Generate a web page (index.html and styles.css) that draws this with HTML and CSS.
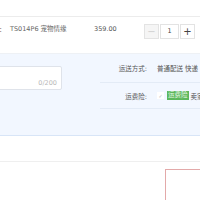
FILE: index.html
```html
<!DOCTYPE html>
<html>
<head>
<meta charset="utf-8">
<link rel="stylesheet" href="styles.css">
</head>
<body>
<div class="page">
  <div class="top"></div>
  <div class="item-row">
    <div class="sku"><span class="colon">：</span>TS014P6 宠物情缘</div>
    <div class="price">359.00</div>
    <div class="stepper">
      <span class="btn minus">−</span>
      <span class="qty">1</span>
      <span class="btn plus">+</span>
    </div>
  </div>
  <div class="ext">
    <div class="memo-col">
      <div class="memo">
        <span class="count">0/200</span>
      </div>
    </div>
    <div class="opts">
      <div class="opt">
        <span class="label">运送方式:</span>
        <span class="value">普通配送 快递</span>
      </div>
      <div class="opt">
        <span class="label">运费险:</span>
        <span class="value"><span class="check">✓</span><span class="tag">运费险</span>卖家赠送</span>
      </div>
      <div class="opt empty"></div>
    </div>
  </div>
  <div class="gap"></div>
  <div class="submit-area">
    <div class="submit-box"></div>
  </div>
</div>
</body>
</html>
```

FILE: styles.css
```css
html, body {
  margin: 0;
  padding: 0;
  background: #fff;
}
.page {
  width: 200px;
  height: 200px;
  overflow: hidden;
  font-family: "DejaVu Sans", "Noto Sans CJK SC", sans-serif;
  font-size: 6.5px;
  color: #555;
}
.top {
  height: 16px;
  border-bottom: 1px solid #ececec;
}
.item-row {
  height: 36px;
  display: flex;
  align-items: flex-start;
  border-bottom: 1px solid #eef1f5;
}
.sku {
  width: 94px;
  flex-shrink: 0;
  padding-top: 7px;
  line-height: 10px;
  white-space: nowrap;
  overflow: hidden;
  color: #666;
  display: flex;
}
.colon {
  margin-left: -1px;
  width: 11px;
  font-family: "Noto Sans CJK SC", sans-serif;
}
.price {
  width: 50px;
  flex-shrink: 0;
  padding-top: 7px;
  line-height: 10px;
  color: #555;
}
.stepper {
  margin-top: 7px;
  display: flex;
  gap: 1px;
  flex-shrink: 0;
}
.btn, .qty {
  height: 13px;
  border: 1px solid #e3e3e3;
  display: flex;
  align-items: center;
  justify-content: center;
  line-height: 1;
  background: #fff;
}
.btn {
  width: 13px;
  font-size: 10px;
}
.minus {
  background: #f5f5f5;
  color: #d0d0d0;
}
.plus {
  color: #444;
}
.qty {
  width: 17px;
  font-size: 6.5px;
  color: #444;
}
.ext {
  height: 81px;
  display: flex;
  background: #f2f7ff;
  border-bottom: 1px solid #d8e5f7;
}
.memo-col {
  width: 100px;
  flex-shrink: 0;
  padding-top: 12px;
}
.memo {
  margin-left: -4px;
  width: 64px;
  height: 22px;
  background: #fff;
  border: 1px solid #dfe3ea;
  border-radius: 2px;
  display: flex;
  align-items: flex-end;
  justify-content: flex-end;
}
.count {
  color: #b8b8b8;
  line-height: 10px;
  margin: 0 4px 1px 0;
}
.opts {
  flex: 1;
  min-width: 0;
  overflow: hidden;
  display: flex;
  flex-direction: column;
}
.opt {
  display: flex;
  align-items: center;
  height: 25px;
  flex-shrink: 0;
  border-bottom: 1px solid #e3ebf6;
  white-space: nowrap;
}
.opt:first-child {
  height: 28px;
}
.opt.empty {
  border-bottom: 0;
  flex: 1;
}
.label {
  width: 47px;
  flex-shrink: 0;
  text-align: right;
  color: #555;
}
.value {
  margin-left: 10px;
  display: flex;
  align-items: center;
  color: #555;
}
.check {
  width: 7px;
  height: 7px;
  background: #fff;
  color: #bbb;
  font-size: 5px;
  display: flex;
  align-items: center;
  justify-content: center;
  margin-right: 3px;
}
.tag {
  background: #5cb85c;
  color: #e8f7e8;
  padding: 0 1px;
  line-height: 9px;
  margin-right: 2px;
}
.gap {
  height: 25px;
  border-bottom: 1px solid #efefef;
}
.submit-area {
  display: flex;
  justify-content: flex-end;
  padding-top: 7px;
}
.submit-box {
  width: 40px;
  height: 40px;
  border: 1px solid #e3a9a9;
  border-right: 0;
  margin-right: -6px;
}
```
